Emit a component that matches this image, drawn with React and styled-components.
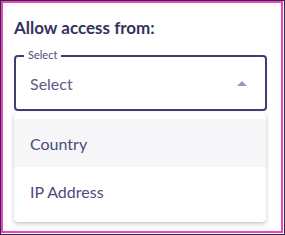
import React from 'react'
import styled, { createGlobalStyle } from 'styled-components'

const GlobalStyle = createGlobalStyle`
    body{
        margin: 0;
        background: #fff;
        font-family: Lato, "Noto Sans", sans-serif;
    }
`;

const options = ['Country', 'IP Address']

function App() {
    return (
        <Frame>
            <GlobalStyle />
            <Panel>
                <Title>Allow access from:</Title>
                <Field>
                    <Legend>Select</Legend>
                    <Value>Select</Value>
                    <Caret />
                </Field>
                <Menu>
                    {options.map((item, i) => (
                        <Option key={item} active={i === 0}>{item}</Option>
                    ))}
                </Menu>
            </Panel>
        </Frame>
    )
}

const Frame = styled.div`
    width: 285px;
    height: 235px;
    box-sizing: border-box;
    border: 1px solid #2b2a4c;
    padding: 0 1px 1px 0;
`;

const Panel = styled.div`
    height: 100%;
    box-sizing: border-box;
    border: 2px solid #ee45bd;
    padding: 15px 14px 0 11px;
`;

const Title = styled.h2`
    margin: 0;
    font-size: 17px;
    line-height: 20px;
    font-weight: 700;
    color: #35325e;
`;

const Field = styled.div`
    position: relative;
    margin-top: 17px;
    height: 56px;
    box-sizing: border-box;
    border: 2px solid #423d70;
    border-radius: 4px;
    display: flex;
    align-items: center;
    padding: 0 18px 0 14px;
`;

const Legend = styled.span`
    position: absolute;
    top: -9px;
    left: 8px;
    padding: 0 4px;
    background: #fff;
    font-size: 11px;
    line-height: 14px;
    color: #4d4a7a;
`;

const Value = styled.span`
    flex: 1;
    font-size: 16px;
    color: #5f5b8a;
`;

const Caret = styled.span`
    width: 0;
    height: 0;
    border-left: 5px solid transparent;
    border-right: 5px solid transparent;
    border-bottom: 5px solid #9b97b4;
`;

const Menu = styled.div`
    margin-top: 1px;
    width: 252px;
    background: #fff;
    border-radius: 4px;
    box-shadow: 0 2px 5px rgba(0, 0, 0, 0.18), 0 1px 2px rgba(0, 0, 0, 0.08);
    padding: 7px 0 7px;
`;

const Option = styled.div`
    height: 48px;
    display: flex;
    align-items: center;
    padding-left: 16px;
    font-size: 16px;
    color: #4d4a7a;
    background: ${props => props.active ? '#f6f6f9' : '#fff'};
`;

export default App
